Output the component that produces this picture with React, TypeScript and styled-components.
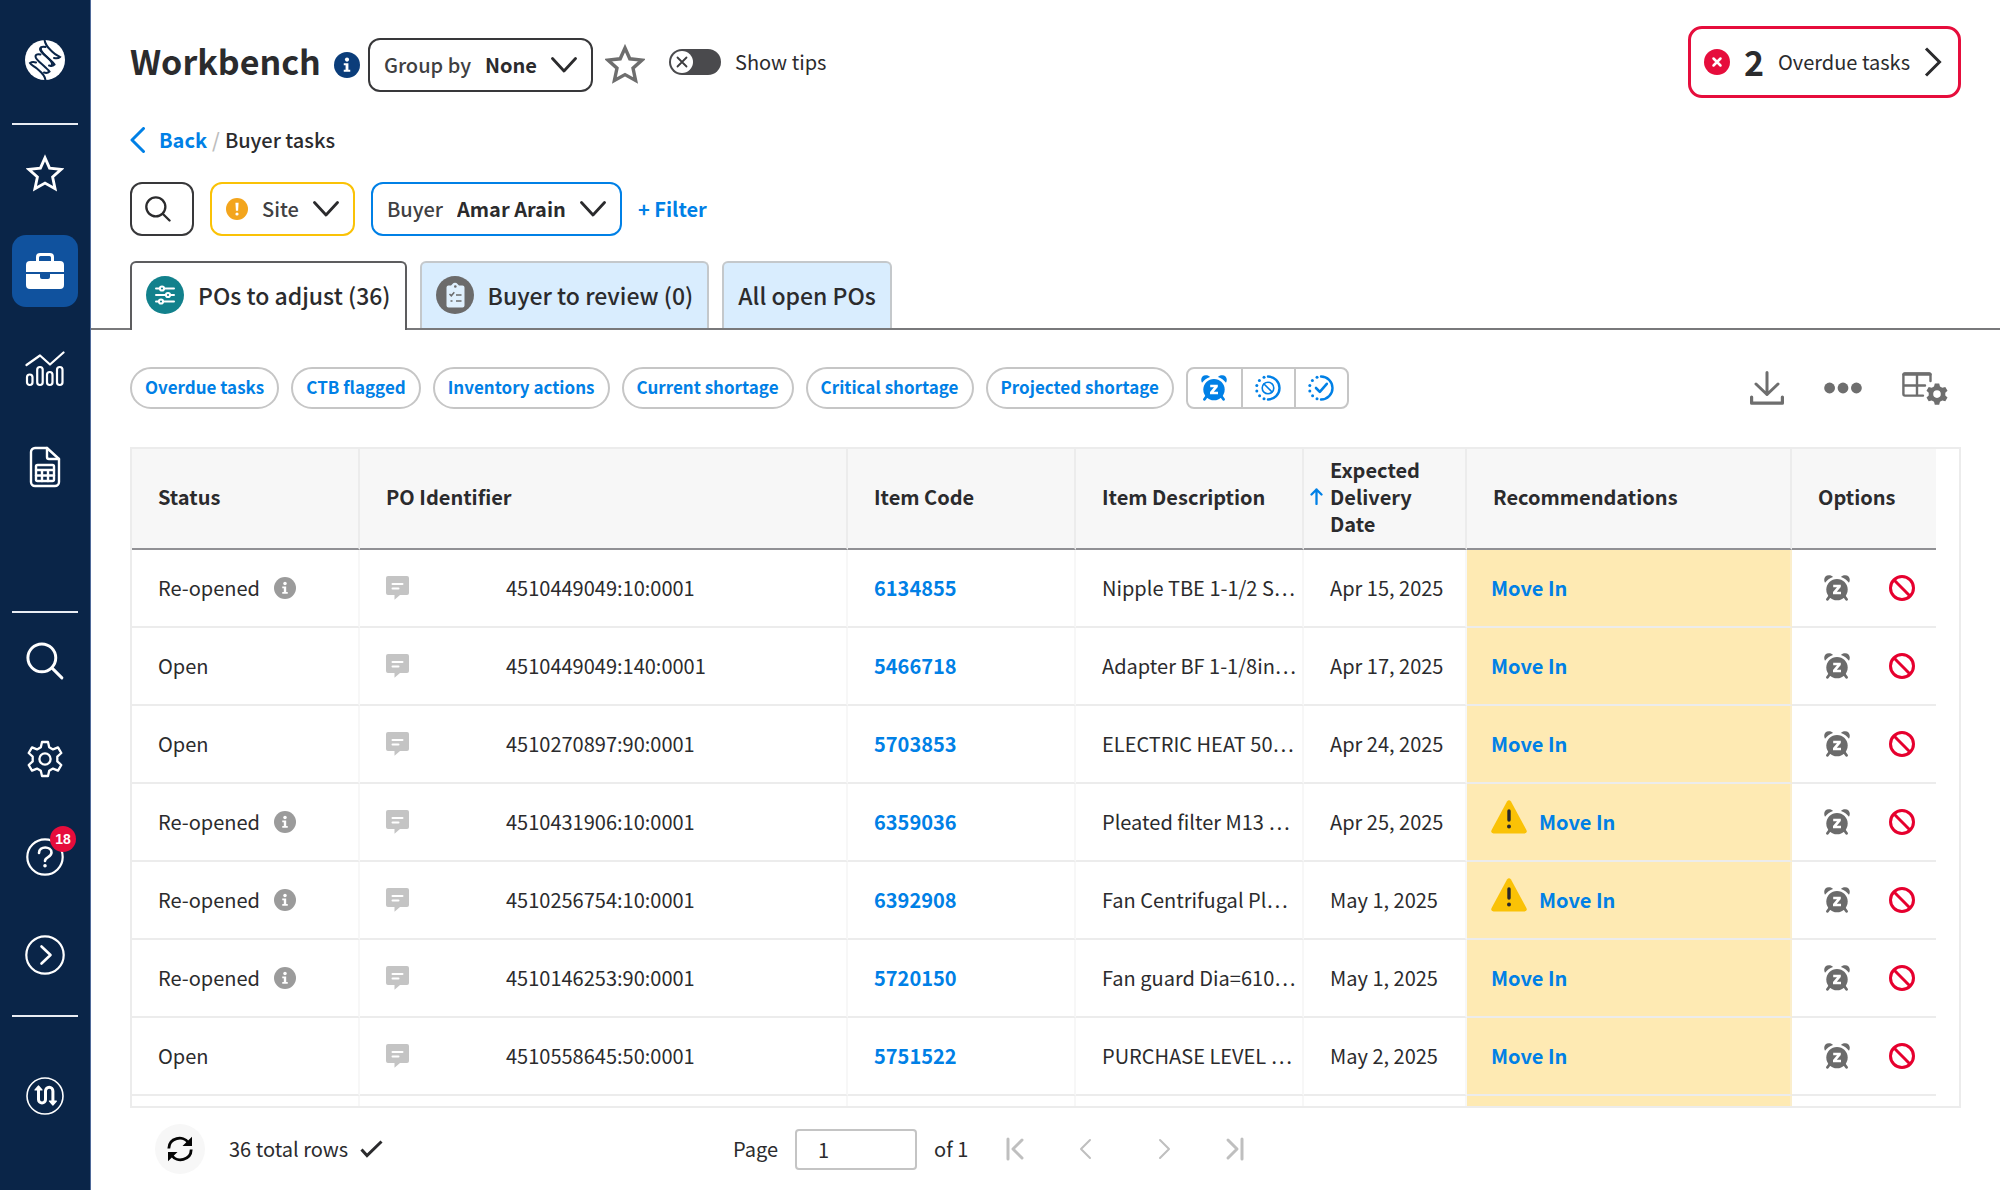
import React, { useState } from "react";
import styled, { createGlobalStyle, css } from "styled-components";

const blue = "#0080e6";
const ink = "#2b2b2d";
const navy = "#0a2548";
const gray = "#6e6e6e";
const red = "#e6002e";
const family = `"Noto Sans CJK KR", "Noto Sans CJK SC", "Noto Sans", sans-serif`;

const GlobalStyle = createGlobalStyle`
  * { box-sizing: border-box; }
  body { margin: 0; background: #fff; color: ${ink}; font: 400 20px/28px ${family}; }
  button, input, select { font: inherit; color: inherit; margin: 0; }
  button { cursor: pointer; }
  svg { display: block; flex: none; }
`;

/* ---------- layout ---------- */

const Page = styled.div`
  display: grid;
  grid-template-columns: 91px minmax(0, 1fr);
  height: 100vh;
`;

const Sidebar = styled.nav`
  display: flex;
  flex-direction: column;
  align-items: center;
  padding: 36px 0;
  background: ${navy};
  border-right: 1px solid #4f6a9a;
`;

const Rule = styled.hr`
  width: 66px;
  height: 2px;
  margin: 0;
  border: 0;
  flex: none;
  background: #e9edf3;
`;

const NavGroup = styled.div`
  display: flex;
  flex-direction: column;
  gap: 26px;
  padding: 12px 0 24px;
`;

const FootNav = styled.div`
  padding: 43px 0 22px;
`;

const Spacer = styled.div`
  flex: 1;
`;

const NavButton = styled.button<{ $active?: boolean }>`
  position: relative;
  display: grid;
  place-items: center;
  width: 66px;
  height: 72px;
  padding: 0;
  border: 0;
  border-radius: 14px;
  color: #fff;
  background: ${(p) => (p.$active ? "#10529e" : "transparent")};
`;

const Brand = styled.a`
  display: block;
  padding: 4px 0;
  margin-bottom: 39px;
`;

const Count = styled.span`
  position: absolute;
  top: 5px;
  right: 2px;
  display: grid;
  place-items: center;
  width: 26px;
  height: 26px;
  border-radius: 13px;
  background: #e60d3c;
  font: 700 14px/26px "Liberation Sans", Arial, sans-serif;
`;

const Main = styled.main`
  display: flex;
  flex-direction: column;
  min-width: 0;
  min-height: 0;
  padding-top: 26px;
`;

const Header = styled.header`
  display: flex;
  align-items: center;
  justify-content: space-between;
  padding: 0 39px;
  margin-bottom: 28px;
`;

const HeaderTools = styled.div`
  display: flex;
  align-items: center;
  gap: 8px;
  padding-top: 5px;
`;

const Title = styled.h1`
  margin: 0 5px 0 0;
  padding-bottom: 8px;
  font-size: 34px;
  line-height: 44px;
  font-weight: 700;
`;

const PlainButton = styled.button`
  display: block;
  padding: 0;
  border: 0;
  background: none;
`;

const StarButton = styled(PlainButton)`
  margin-left: 4px;
  padding-bottom: 2px;
  color: ${gray};
`;

const ActionButton = styled(PlainButton)`
  color: inherit;
`;

const DropBox = styled.label<{ $color?: string }>`
  display: flex;
  align-items: center;
  gap: 14px;
  height: 54px;
  padding: 0 14px;
  border: 2px solid ${(p) => p.$color || "#38383a"};
  border-radius: 12px;
  font-weight: 500;
  color: #404042;
`;

const DropSelect = styled.select<{ $strong?: boolean }>`
  appearance: none;
  padding: 0;
  border: 0;
  background: none;
  font-weight: ${(p) => (p.$strong ? 700 : 500)};
  color: ${(p) => (p.$strong ? ink : "inherit")};
  line-height: 28px;
`;

const ToggleLabel = styled.label`
  display: flex;
  align-items: center;
  gap: 14px;
  margin-left: 16px;
  padding-bottom: 6px;
`;

const ToggleTrack = styled.span`
  position: relative;
  width: 52px;
  height: 26px;
`;

const ToggleInput = styled.input`
  appearance: none;
  display: block;
  width: 52px;
  height: 26px;
  border-radius: 13px;
  background: #4a4a4d;
`;

const ToggleKnob = styled.svg<{ $on: boolean }>`
  position: absolute;
  top: 2px;
  left: ${(p) => (p.$on ? "28px" : "2px")};
  pointer-events: none;
`;

const Overdue = styled.button`
  display: flex;
  align-items: center;
  height: 72px;
  gap: 14px;
  padding: 0 16px 0 13px;
  border: 3px solid #e60d3c;
  border-radius: 14px;
  background: #fff;
`;

const OverdueCount = styled.strong`
  font-size: 34px;
  line-height: 40px;
  font-weight: 700;
`;

const Crumbs = styled.nav`
  display: flex;
  align-items: center;
  padding: 0 39px;
  margin-bottom: 28px;
  font-weight: 500;
`;

const BackLink = styled.a`
  display: flex;
  align-items: center;
  gap: 13px;
  color: ${blue};
  font-weight: 700;
  text-decoration: none;
`;

const Slash = styled.span`
  margin: 0 5px;
  color: #bdbdbd;
`;

const Filters = styled.div`
  display: flex;
  align-items: center;
  gap: 16px;
  padding: 0 39px;
  margin-bottom: 25px;
`;

const SearchButton = styled.button`
  display: grid;
  place-items: center;
  width: 64px;
  height: 54px;
  padding: 0 8px 0 0;
  border: 2px solid #38383a;
  border-radius: 12px;
  background: #fff;
`;

const AddFilter = styled(PlainButton)`
  color: ${blue};
  font-weight: 700;
`;

const Tabs = styled.div`
  display: flex;
  align-items: flex-end;
  gap: 13px;
  padding: 0 39px;
  margin-bottom: 37px;
  border-bottom: 2px solid #79797b;
`;

const Tab = styled.button<{ $active?: boolean }>`
  display: flex;
  align-items: center;
  gap: 14px;
  height: 67px;
  padding: 0 14px 2px;
  border: 2px solid #c4c8cb;
  border-bottom: 0;
  border-radius: 6px 6px 0 0;
  background: #d9edfe;
  font-size: 23px;
  line-height: 32px;
  font-weight: 500;
  ${(p) =>
    p.$active &&
    css`
      height: 69px;
      margin-bottom: -2px;
      padding-bottom: 4px;
      border-color: #5d5d5f;
      background: #fff;
    `}
`;

const Toolbar = styled.div`
  display: flex;
  align-items: center;
  justify-content: space-between;
  padding: 0 52px 0 39px;
  margin-bottom: 38px;
`;

const Chips = styled.div`
  display: flex;
  gap: 12px;
`;

const Chip = styled.button`
  height: 42px;
  padding: 0 13px 2px;
  border: 2px solid #c6c6c6;
  border-radius: 21px;
  background: #fff;
  color: ${blue};
  font-size: 17px;
  line-height: 26px;
  font-weight: 700;
  white-space: nowrap;
`;

const IconGroup = styled.div`
  display: flex;
  border: 2px solid #c6c6c6;
  border-radius: 8px;
`;

const GroupButton = styled.button`
  display: grid;
  place-items: center;
  width: 53px;
  height: 38px;
  padding: 0;
  border: 0;
  background: none;
  color: ${blue};
  & + & {
    border-left: 2px solid #c6c6c6;
  }
`;

const Actions = styled.div`
  display: flex;
  align-items: center;
  gap: 40px;
  color: ${gray};
`;

const GridFrame = styled.section`
  flex: 1;
  min-height: 0;
  margin: 0 39px;
  padding-right: 23px;
  overflow: hidden;
  border: 2px solid #ececec;
`;

const Table = styled.table`
  width: 100%;
  table-layout: fixed;
  border-collapse: separate;
  border-spacing: 0;
`;

const Th = styled.th<{ $sorted?: boolean }>`
  height: 101px;
  padding: 0 0 4px ${(p) => (p.$sorted ? 6 : 26)}px;
  border-right: 2px solid #ececec;
  border-bottom: 2px solid #919195;
  background: #f7f7f7;
  text-align: left;
  font-weight: 700;
  line-height: 27px;
  &:last-child {
    border-right: 0;
  }
`;

const SortHead = styled.div`
  display: flex;
  align-items: center;
  gap: 7px;
`;

const Td = styled.td<{ $flag?: boolean }>`
  height: 78px;
  padding: 0 0 0 ${(p) => (p.$flag ? 24 : 26)}px;
  border-right: 2px solid ${(p) => (p.$flag ? "#fbeecb" : "#f7f7f7")};
  border-bottom: 2px solid #ececec;
  background: ${(p) => (p.$flag ? "#feeab3" : "#fff")};
  white-space: nowrap;
  overflow: hidden;
  &:last-child {
    border-right: 0;
  }
`;

const CellRow = styled.div<{ $gap: number }>`
  display: flex;
  align-items: center;
  gap: ${(p) => p.$gap}px;
`;

const CodeLink = styled.a`
  color: ${blue};
  font-weight: 700;
  text-decoration: none;
`;

const MoveIn = styled(PlainButton)`
  color: ${blue};
  font-weight: 700;
`;

const WarningMark = styled.span`
  padding-bottom: 10px;
`;

const OptionButtons = styled.div`
  display: flex;
  gap: 38px;
  padding-left: 6px;
  color: #6b6b6b;
`;

const Footer = styled.footer`
  display: flex;
  align-items: center;
  flex: none;
  height: 82px;
  padding: 0 64px;
`;

const Refresh = styled.button`
  display: grid;
  place-items: center;
  width: 50px;
  height: 50px;
  margin-right: 24px;
  padding: 0;
  border: 0;
  border-radius: 25px;
  background: #f7f7f7;
`;

const Total = styled.div`
  display: flex;
  align-items: center;
  gap: 12px;
  width: 504px;
`;

const PageLabel = styled.label`
  display: flex;
  align-items: center;
  gap: 17px;
  margin-right: 17px;
`;

const PageInput = styled.input`
  width: 122px;
  height: 41px;
  padding: 0 21px;
  border: 2px solid #c4c4c4;
  border-radius: 4px;
  background: #fff;
`;

const Pager = styled.div`
  display: flex;
  gap: 60px;
  margin-left: 37px;
  color: #bfbfbf;
`;

const PagerPair = styled.div`
  display: flex;
  gap: 50px;
`;

/* ---------- icons ---------- */

const line = {
  fill: "none",
  stroke: "currentColor",
  strokeLinecap: "round" as const,
  strokeLinejoin: "round" as const,
};

const LogoIcon = () => (
  <svg width="40" height="40" viewBox="0 0 40 40">
    <circle cx="20" cy="20" r="20" fill="#fff" />
    <g fill="none" stroke={navy} strokeWidth="2" strokeLinecap="round">
      <path d="M19.500 -.5C20 5 23 7.500 27 11.500c3.500 3.500 6.500 4.500 8 5.500-1.500 1.500-4 1.500-6 1" />
      <path d="M20.500 7c-3.500-1-6.500 .5-5 3.500 2 3.500 6 6 9 9 2.500 2.500 3.500 5 1.500 6.500" />
      <path d="M16 7.500c-1.500 4 3.500 7 7 10.500 3 3 5.500 4.500 6.500 6.500-1.500 1.500-4 1.500-5.500 1" />
      <path d="M15.500 14.500c-3.500-1-6 .5-4.500 3.500 2 3.500 6 6 9 9 2 2 3.500 3 4.500 4.500-1.500 1.500-4 1.500-5.500 1" />
      <path d="M11 22.500c-2-.5-4.500-.5-6 .5 1 2 4 3 7.500 6 4 3.500 7.500 6 8 11.500" />
    </g>
  </svg>
);

const StarIcon = ({ size, weight }: { size: number; weight: number }) => (
  <svg width={size} height={size} viewBox="0 0 40 40" {...line} strokeLinejoin="miter" strokeWidth={weight}>
    <path d="M20 4l4.800 10.800 12.200 1.300-9 8.100 2.600 12.300L20 30.600 9.400 36.500 12 24.200l-9-8.100 12.200-1.300z" />
  </svg>
);

const BriefcaseIcon = () => (
  <svg width="38" height="36" viewBox="0 0 38 36">
    <path
      fill="#fff"
      fillRule="evenodd"
      d="M10 8V4a4 4 0 0 1 4-4h10a4 4 0 0 1 4 4v4h6a4 4 0 0 1 4 4v7H0v-7a4 4 0 0 1 4-4zm3 0h12V4.500a1.500 1.500 0 0 0-1.500-1.500h-9A1.500 1.500 0 0 0 13 4.500zM0 21h14v3a2 2 0 0 0 2 2h6a2 2 0 0 0 2-2v-3h14v11a4 4 0 0 1-4 4H4a4 4 0 0 1-4-4z"
    />
  </svg>
);

const ChartIcon = () => (
  <svg width="40" height="36" viewBox="0 0 40 36" {...line} strokeWidth="2.200">
    <path d="M1.500 14L15 4.500l10 9L38.500 1.500" />
    <rect x="2" y="23.500" width="5.500" height="10.500" rx="2.700" />
    <rect x="12.200" y="16" width="5.500" height="18" rx="2.700" />
    <rect x="22" y="21" width="5.500" height="13" rx="2.700" />
    <rect x="32" y="16" width="5.500" height="18" rx="2.700" />
  </svg>
);

const SheetIcon = () => (
  <svg width="32" height="42" viewBox="0 0 32 42" {...line} strokeWidth="2.400">
    <path d="M6 2h12l12 11v23a4 4 0 0 1-4 4H6a4 4 0 0 1-4-4V6a4 4 0 0 1 4-4z" />
    <path d="M18 2v9a2 2 0 0 0 2 2h10" />
    <rect x="7" y="19" width="18" height="16" rx="1.500" />
    <path d="M7 24h18M7 29.500h18M13 24v11M19 24v11" />
  </svg>
);

const SearchIcon = ({ size, weight }: { size: number; weight: number }) => (
  <svg width={size} height={size} viewBox="0 0 36 36" {...line} strokeWidth={weight}>
    <circle cx="15" cy="15" r="13.200" />
    <path d="M24.500 24.500L34 34" />
  </svg>
);

const GearIcon = () => (
  <svg width="36" height="38" viewBox="0 0 36 38" {...line} strokeWidth="2.300">
    <path d="M15 2h6l1.200 5.200 3.800 2.200 5-2 3.300 5.600-4 3.600v4.800l4 3.600-3.300 5.600-5-2-3.800 2.200L21 36h-6l-1.200-5.200L10 28.600l-5 2L1.700 25l4-3.600v-4.800l-4-3.600L5 7.400l5 2 3.800-2.200z" />
    <circle cx="18" cy="19" r="5.600" />
  </svg>
);

const HelpIcon = () => (
  <svg width="38" height="38" viewBox="0 0 38 38" {...line} strokeWidth="2.200">
    <circle cx="19" cy="19" r="17.700" />
    <path d="M13 15c0-7.500 12.500-7 12.500-.5 0 5-6.500 4-6.500 8.500" strokeWidth="2.600" />
    <circle cx="19" cy="27.800" r="1" fill="currentColor" strokeWidth="1.600" />
  </svg>
);

const NextCircleIcon = () => (
  <svg width="40" height="40" viewBox="0 0 40 40" {...line} strokeWidth="2.200">
    <circle cx="20" cy="20" r="18.700" />
    <path d="M16.500 11.500l9 8.500-9 8.500" strokeWidth="2.600" />
  </svg>
);

const RouteIcon = () => (
  <svg width="38" height="38" viewBox="0 0 38 38" {...line}>
    <circle cx="19" cy="19" r="18" strokeWidth="1.600" />
    <path d="M12.500 12v10.500a3.500 3.500 0 0 0 7 0V14a3.700 3.700 0 0 1 7.400 0v10" strokeWidth="3" />
    <path d="M12.500 9l3.500 4H9zM26.900 28l-3.500-4h7z" fill="currentColor" strokeWidth="1.200" />
  </svg>
);

const InfoIcon = ({ size, color }: { size: number; color: string }) => (
  <svg width={size} height={size} viewBox="0 0 24 24">
    <circle cx="12" cy="12" r="12" fill={color} />
    <circle cx="12" cy="7" r="1.900" fill="#fff" />
    <path d="M9 10.300h4.300v6h1.700v2H9v-2h1.700v-4H9z" fill="#fff" />
  </svg>
);

const ChevronDown = () => (
  <svg width="26" height="16" viewBox="0 0 26 16" {...line} stroke={ink} strokeWidth="2.800">
    <path d="M1.500 1.500L13 14 24.500 1.500" />
  </svg>
);

const CrossDisc = () => (
  <svg width="26" height="26" viewBox="0 0 26 26">
    <circle cx="13" cy="13" r="13" fill="#e60d3c" />
    <path d="M9.500 9.500l7 7m0-7l-7 7" stroke="#fff" strokeWidth="2.500" strokeLinecap="round" />
  </svg>
);

const ChevronRightBig = () => (
  <svg width="18" height="30" viewBox="0 0 18 30" {...line} strokeLinecap="butt" strokeLinejoin="miter" strokeWidth="3">
    <path d="M2 1.500L15.500 15 2 28.500" />
  </svg>
);

const BackIcon = () => (
  <svg width="16" height="26" viewBox="0 0 16 26" {...line} strokeWidth="3">
    <path d="M13.500 1.500L2 13l11.500 11.500" />
  </svg>
);

const AlertDisc = () => (
  <svg width="22" height="22" viewBox="0 0 22 22">
    <circle cx="11" cy="11" r="11" fill="#f3a51d" />
    <path d="M9.400 4.800h3.200l-.5 8H9.900z" fill="#fff" />
    <circle cx="11" cy="16" r="1.600" fill="#fff" />
  </svg>
);

const AdjustIcon = () => (
  <svg width="38" height="38" viewBox="0 0 38 38">
    <circle cx="19" cy="19" r="19" fill="#12818c" />
    <g stroke="#fff" strokeWidth="2" fill="#12818c" strokeLinecap="round">
      <path d="M10 12.500h18M10 19h18M10 25.500h18" />
      <circle cx="16" cy="12.500" r="2.100" />
      <circle cx="22" cy="19" r="2.100" />
      <circle cx="15" cy="25.500" r="2.100" />
    </g>
  </svg>
);

const ReviewIcon = () => (
  <svg width="38" height="38" viewBox="0 0 38 38">
    <circle cx="19" cy="19" r="19" fill="#6b6b6b" />
    <path
      d="M12.500 9.500H15l1.500-1.500a3 3 0 0 1 5 0L23 9.500h3.500a2 2 0 0 1 2 2v18a2 2 0 0 1-2 2h-14a2 2 0 0 1-2-2v-18a2 2 0 0 1 2-2z"
      fill="#dff0fd"
    />
    <circle cx="19.300" cy="10.500" r="1.300" fill="#6b6b6b" />
    <path d="M13.500 18l1.800 1.800 3-3.500M20 19h5.500M20 25h5.500M14.500 25h2" fill="none" stroke="#6b6b6b" strokeWidth="1.500" />
  </svg>
);

const SnoozeIcon = () => (
  <svg width="26" height="26" viewBox="0 0 26 26" fill="currentColor">
    <circle cx="13" cy="14.600" r="10.700" />
    <path d="M1 7.800C-1 4 1 .2 4.800 .2c2 0 3.400 .7 4.200 1.700C5.800 3 3 5 1 7.800zM25 7.800C27 4 25 .2 21.200 .2c-2 0-3.400 .7-4.200 1.700C20.200 3 23 5 25 7.800z" />
    <path d="M5.500 21.500L3.500 24.300M20.500 21.500l2 2.800" stroke="currentColor" strokeWidth="2.800" strokeLinecap="round" />
    <path d="M9.200 9.800h7.600v2.300l-4 4.600h4.200v2.500H9v-2.300l4-4.600H9.200z" fill="#fff" />
  </svg>
);

const ProgressRing = ({ children }: { children: React.ReactNode }) => (
  <svg width="26" height="26" viewBox="0 0 26 26" {...line} strokeWidth="2">
    <path d="M13 1.500a11.500 11.500 0 0 1 0 23" strokeWidth="2.400" />
    <g fill="currentColor" stroke="none">
      <circle cx="9" cy="2.300" r="1.500" />
      <circle cx="4.400" cy="5.600" r="1.500" />
      <circle cx="1.800" cy="10.500" r="1.500" />
      <circle cx="1.800" cy="16" r="1.500" />
      <circle cx="4.600" cy="20.800" r="1.500" />
      <circle cx="9" cy="23.700" r="1.500" />
    </g>
    {children}
  </svg>
);

const DownloadIcon = () => (
  <svg width="34" height="34" viewBox="0 0 34 34" {...line} strokeWidth="3">
    <path d="M17 1.500v22M6 13l11 10.500L28 13" />
    <path d="M1.600 26v6.200h30.800V26" strokeWidth="3.200" />
  </svg>
);

const DotsIcon = () => (
  <svg width="38" height="12" viewBox="0 0 38 12" fill="currentColor">
    <circle cx="5.600" cy="6" r="5.400" />
    <circle cx="19" cy="6" r="5.400" />
    <circle cx="32.400" cy="6" r="5.400" />
  </svg>
);

const TableGearIcon = () => (
  <svg width="46" height="34" viewBox="0 0 46 34">
    <g {...line} strokeWidth="2.400">
      <path d="M28.500 10V4a1.600 1.600 0 0 0-1.600-1.600H3A1.600 1.600 0 0 0 1.400 4v19A1.600 1.600 0 0 0 3 24.600h18M1.400 14.500H23M15 3v21.600" />
      <path d="M2 3.200h26" strokeWidth="3.200" />
    </g>
    <path
      fill="currentColor"
      fillRule="evenodd"
      d="M32.800 12.500h4.400l.8 3 2.300 1.300 3-.9 2.200 3.800-2.200 2.100v2.600l2.200 2.100-2.200 3.800-3-.9-2.300 1.300-.8 3h-4.400l-.8-3-2.300-1.300-3 .9-2.200-3.800 2.200-2.100v-2.600l-2.200-2.100 2.200-3.800 3 .9 2.300-1.300zM35 19.300a3.800 3.800 0 1 0 0 7.600 3.800 3.800 0 0 0 0-7.600z"
    />
  </svg>
);

const SortIcon = () => (
  <svg width="13" height="17" viewBox="0 0 13 17" {...line} stroke={blue} strokeWidth="2.300">
    <path d="M6.500 16V1.500M1.500 6.500l5-5 5 5" />
  </svg>
);

const CommentIcon = () => (
  <svg width="23" height="24" viewBox="0 0 23 24">
    <path d="M2 0h19a2 2 0 0 1 2 2v15a2 2 0 0 1-2 2h-7l-5.500 4.800V19H2a2 2 0 0 1-2-2V2a2 2 0 0 1 2-2z" fill="#c4c4c4" />
    <path d="M6.500 8h10M6.500 12.500h6" stroke="#fff" strokeWidth="2" strokeLinecap="round" />
  </svg>
);

const BanIcon = () => (
  <svg width="28" height="26" viewBox="0 0 28 26" fill="none" stroke={red} strokeWidth="3">
    <circle cx="14" cy="13" r="11.500" />
    <path d="M5.800 4.800l16.400 16.400" />
  </svg>
);

const WarningIcon = () => (
  <svg width="36" height="34" viewBox="0 0 36 34">
    <path d="M16 1.600q2-2.600 4 0L35.400 30q1.300 3-1.900 3.400h-31Q-.7 33 .6 30z" fill="#fac206" />
    <path d="M18 11v9" stroke="#28282c" strokeWidth="3.400" strokeLinecap="round" />
    <circle cx="18" cy="26.500" r="2" fill="#28282c" />
  </svg>
);

const RefreshIcon = () => (
  <svg width="26" height="26" viewBox="0 0 26 26">
    <g fill="none" stroke="#050505" strokeWidth="2.800">
      <path d="M1.800 12.500C2 2 16-1.500 21.500 7" />
      <path d="M24.200 13.500C24 24 10 27.500 4.500 19" />
    </g>
    <path d="M25 .8V10h-9.500zM1 25.200V16h9.500z" fill="#050505" />
  </svg>
);

const CheckIcon = () => (
  <svg width="23" height="18" viewBox="0 0 23 18" {...line} strokeWidth="3" strokeLinecap="butt" strokeLinejoin="miter">
    <path d="M1.500 9.500l5.500 6L21.500 1.500" />
  </svg>
);

const PagerIcon = ({ d, weight = 3 }: { d: string; weight?: number }) => (
  <svg width="20" height="24" viewBox="0 0 20 24" {...line} strokeWidth={weight}>
    <path d={d} />
  </svg>
);

/* ---------- data ---------- */

type Row = {
  status: string;
  po: string;
  item: string;
  description: string;
  date: string;
  warn?: boolean;
};

const rows: Row[] = [
  { status: "Re-opened", po: "4510449049:10:0001", item: "6134855", description: "Nipple TBE 1-1/2 S…", date: "Apr 15, 2025" },
  { status: "Open", po: "4510449049:140:0001", item: "5466718", description: "Adapter BF 1-1/8in…", date: "Apr 17, 2025" },
  { status: "Open", po: "4510270897:90:0001", item: "5703853", description: "ELECTRIC HEAT 50…", date: "Apr 24, 2025" },
  { status: "Re-opened", po: "4510431906:10:0001", item: "6359036", description: "Pleated filter M13 …", date: "Apr 25, 2025", warn: true },
  { status: "Re-opened", po: "4510256754:10:0001", item: "6392908", description: "Fan Centrifugal Pl…", date: "May 1, 2025", warn: true },
  { status: "Re-opened", po: "4510146253:90:0001", item: "5720150", description: "Fan guard Dia=610…", date: "May 1, 2025" },
  { status: "Open", po: "4510558645:50:0001", item: "5751522", description: "PURCHASE LEVEL …", date: "May 2, 2025" },
];

const chips = [
  "Overdue tasks",
  "CTB flagged",
  "Inventory actions",
  "Current shortage",
  "Critical shortage",
  "Projected shortage",
];

/* ---------- sections ---------- */

const SideNav = () => (
  <Sidebar aria-label="Main">
    <Brand href="#" aria-label="Home">
      <LogoIcon />
    </Brand>
    <Rule />
    <NavGroup>
      <NavButton aria-label="Favorites"><StarIcon size={38} weight={3} /></NavButton>
      <NavButton aria-label="Workbench" $active><BriefcaseIcon /></NavButton>
      <NavButton aria-label="Analytics"><ChartIcon /></NavButton>
      <NavButton aria-label="Reports"><SheetIcon /></NavButton>
    </NavGroup>
    <Spacer />
    <Rule />
    <NavGroup>
      <NavButton aria-label="Search"><SearchIcon size={38} weight={2.8} /></NavButton>
      <NavButton aria-label="Settings"><GearIcon /></NavButton>
      <NavButton aria-label="Help">
        <HelpIcon />
        <Count>18</Count>
      </NavButton>
      <NavButton aria-label="Expand"><NextCircleIcon /></NavButton>
    </NavGroup>
    <Rule />
    <FootNav>
      <NavButton aria-label="Switch"><RouteIcon /></NavButton>
    </FootNav>
  </Sidebar>
);

const TableRow = ({ row }: { row: Row }) => (
  <tr>
    <Td>
      <CellRow $gap={14}>
        {row.status}
        {row.status === "Re-opened" && <InfoIcon size={22} color="#9b9b9b" />}
      </CellRow>
    </Td>
    <Td>
      <CellRow $gap={97}>
        <PlainButton aria-label="Comments"><CommentIcon /></PlainButton>
        {row.po}
      </CellRow>
    </Td>
    <Td><CodeLink href="#">{row.item}</CodeLink></Td>
    <Td>{row.description}</Td>
    <Td>{row.date}</Td>
    <Td $flag>
      <CellRow $gap={12}>
        {row.warn && <WarningMark><WarningIcon /></WarningMark>}
        <MoveIn>Move In</MoveIn>
      </CellRow>
    </Td>
    <Td>
      <OptionButtons>
        <PlainButton aria-label="Snooze"><SnoozeIcon /></PlainButton>
        <PlainButton aria-label="Dismiss"><BanIcon /></PlainButton>
      </OptionButtons>
    </Td>
  </tr>
);

export default function App() {
  const [tips, setTips] = useState(false);
  const [page, setPage] = useState("1");
  return (
    <>
      <GlobalStyle />
      <Page>
        <SideNav />
        <Main>
          <Header>
            <HeaderTools>
              <Title>Workbench</Title>
              <InfoIcon size={26} color="#0b3d7a" />
              <DropBox>
                Group by
                <DropSelect $strong defaultValue="None"><option>None</option></DropSelect>
                <ChevronDown />
              </DropBox>
              <StarButton aria-label="Favorite"><StarIcon size={40} weight={3.4} /></StarButton>
              <ToggleLabel>
                <ToggleTrack>
                  <ToggleInput type="checkbox" checked={tips} onChange={(e) => setTips(e.target.checked)} />
                  <ToggleKnob $on={tips} width="22" height="22" viewBox="0 0 22 22">
                    <circle cx="11" cy="11" r="11" fill="#fff" />
                    <path d="M6.500 6.500l9 9m0-9l-9 9" stroke="#3c3c3e" strokeWidth="1.800" strokeLinecap="round" />
                  </ToggleKnob>
                </ToggleTrack>
                Show tips
              </ToggleLabel>
            </HeaderTools>
            <Overdue>
              <CrossDisc />
              <OverdueCount>2</OverdueCount>
              Overdue tasks
              <ChevronRightBig />
            </Overdue>
          </Header>

          <Crumbs aria-label="Breadcrumb">
            <BackLink href="#"><BackIcon />Back</BackLink>
            <Slash>/</Slash>
            Buyer tasks
          </Crumbs>

          <Filters>
            <SearchButton aria-label="Search tasks"><SearchIcon size={26} weight={3.2} /></SearchButton>
            <DropBox $color="#fac206">
              <AlertDisc />
              <DropSelect aria-label="Site"><option>Site</option></DropSelect>
              <ChevronDown />
            </DropBox>
            <DropBox $color={blue}>
              Buyer
              <DropSelect $strong defaultValue="Amar Arain"><option>Amar Arain</option></DropSelect>
              <ChevronDown />
            </DropBox>
            <AddFilter>+ Filter</AddFilter>
          </Filters>

          <Tabs role="tablist">
            <Tab role="tab" aria-selected $active><AdjustIcon />POs to adjust (36)</Tab>
            <Tab role="tab" aria-selected={false}><ReviewIcon />Buyer to review (0)</Tab>
            <Tab role="tab" aria-selected={false}>All open POs</Tab>
          </Tabs>

          <Toolbar>
            <Chips>
              {chips.map((c) => <Chip key={c}>{c}</Chip>)}
              <IconGroup>
                <GroupButton aria-label="Snoozed"><SnoozeIcon /></GroupButton>
                <GroupButton aria-label="Dismissed">
                  <ProgressRing>
                    <circle cx="13" cy="13" r="5.800" strokeWidth="1.600" />
                    <path d="M9 9l8 8" strokeWidth="1.600" />
                  </ProgressRing>
                </GroupButton>
                <GroupButton aria-label="Completed">
                  <ProgressRing><path d="M8 13l3.800 3.800 7-8" strokeWidth="2.600" /></ProgressRing>
                </GroupButton>
              </IconGroup>
            </Chips>
            <Actions>
              <ActionButton aria-label="Download"><DownloadIcon /></ActionButton>
              <ActionButton aria-label="More"><DotsIcon /></ActionButton>
              <ActionButton aria-label="Table settings"><TableGearIcon /></ActionButton>
            </Actions>
          </Toolbar>

          <GridFrame>
            <Table>
              <colgroup>
                <col width="228" />
                <col />
                <col width="228" />
                <col width="228" />
                <col width="163" />
                <col width="325" />
                <col width="144" />
              </colgroup>
              <thead>
                <tr>
                  <Th>Status</Th>
                  <Th>PO Identifier</Th>
                  <Th>Item Code</Th>
                  <Th>Item Description</Th>
                  <Th $sorted aria-sort="ascending">
                    <SortHead>
                      <SortIcon />
                      <span>Expected<br />Delivery<br />Date</span>
                    </SortHead>
                  </Th>
                  <Th>Recommendations</Th>
                  <Th>Options</Th>
                </tr>
              </thead>
              <tbody>
                {rows.map((r) => <TableRow key={r.po} row={r} />)}
                <tr aria-hidden>
                  <Td /><Td /><Td /><Td /><Td /><Td $flag /><Td />
                </tr>
              </tbody>
            </Table>
          </GridFrame>

          <Footer>
            <Refresh aria-label="Refresh"><RefreshIcon /></Refresh>
            <Total>36 total rows <CheckIcon /></Total>
            <PageLabel>
              Page
              <PageInput type="text" value={page} onChange={(e) => setPage(e.target.value)} />
            </PageLabel>
            of 1
            <Pager>
              <PagerPair>
                <ActionButton aria-label="First page"><PagerIcon d="M3 2v20M17 3l-9 9 9 9" /></ActionButton>
                <ActionButton aria-label="Previous page"><PagerIcon d="M15 3l-9 9 9 9" weight={2} /></ActionButton>
              </PagerPair>
              <PagerPair>
                <ActionButton aria-label="Next page"><PagerIcon d="M5 3l9 9-9 9" weight={2} /></ActionButton>
                <ActionButton aria-label="Last page"><PagerIcon d="M17 2v20M3 3l9 9-9 9" /></ActionButton>
              </PagerPair>
            </Pager>
          </Footer>
        </Main>
      </Page>
    </>
  );
}
